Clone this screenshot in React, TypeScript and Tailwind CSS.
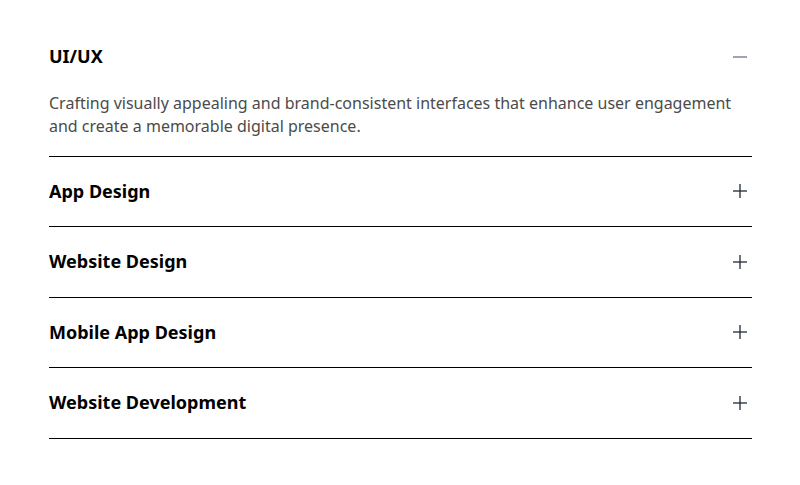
import { useState } from 'react'

const items = [
  {
    title: 'UI/UX',
    body: 'Crafting visually appealing and brand-consistent interfaces that enhance user engagement and create a memorable digital presence.',
  },
  { title: 'App Design', body: '' },
  { title: 'Website Design', body: '' },
  { title: 'Mobile App Design', body: '' },
  { title: 'Website Development', body: '' },
]

function Icon({ open }: { open: boolean }) {
  return (
    <svg width="16" height="16" viewBox="0 0 16 16" className={open ? 'text-gray-500' : 'text-gray-800'}>
      <path d="M1 8h14" stroke="currentColor" strokeWidth="1.3" />
      {!open && <path d="M8 1v14" stroke="currentColor" strokeWidth="1.3" />}
    </svg>
  )
}

export default function App() {
  const [openIdx, setOpenIdx] = useState(0)

  return (
    <div className="min-h-[485px] bg-white pt-[22px] font-['Noto_Sans',sans-serif]">
      <div className="ml-[49px] w-[703px]">
        {items.map((item, i) => {
          const open = openIdx === i
          return (
            <div key={item.title} className="border-b border-black">
              <button
                onClick={() => setOpenIdx(open ? -1 : i)}
                className="flex h-[69.5px] w-full items-center justify-between pr-[4px] text-left"
              >
                <span className="text-[18px] font-bold text-black">{item.title}</span>
                <Icon open={open} />
              </button>
              {open && (
                <p className="pb-[17px] text-[16px] leading-[23.5px] text-[#4b4b4b]">{item.body}</p>
              )}
            </div>
          )
        })}
      </div>
    </div>
  )
}
